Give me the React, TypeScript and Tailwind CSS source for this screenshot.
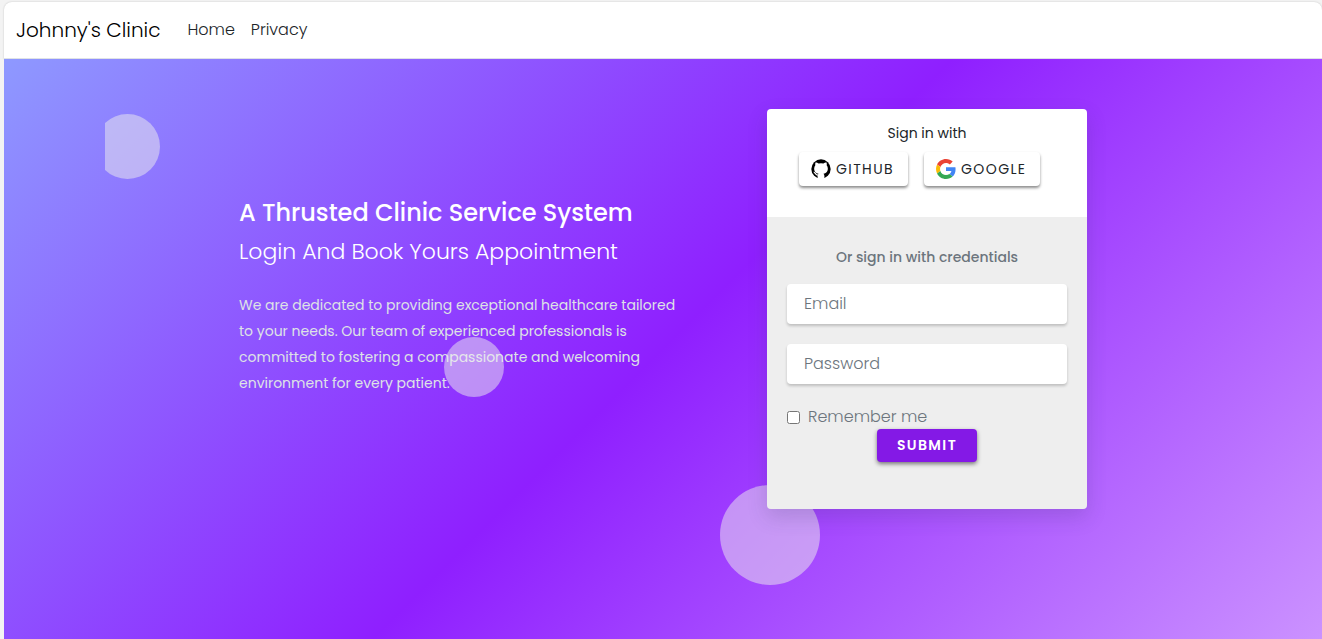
function GithubIcon() {
  return (
    <svg viewBox="0 0 24 24" className="size-5" aria-hidden="true">
      <circle cx="12" cy="12" r="11.6" fill="#000" />
      <path
        fill="#fff"
        d="M5.4 4.200c1.400 0 2.900.6 3.900 1.200a12 12 0 0 1 5.400 0c1-.6 2.500-1.200 3.900-1.200.5 1.200.5 2.300.2 3.200.9 1 1.400 2.300 1.400 3.900 0 4.100-2.300 5.700-5.200 6.300.7.6 1.100 1.500 1.100 2.700V24H7.900v-3.700c0-1.200.4-2.100 1.100-2.700-2.900-.6-5.200-2.200-5.200-6.300 0-1.600.5-2.900 1.400-3.900-.3-.9-.3-2 .2-3.200z"
      />
      <path fill="none" stroke="#fff" strokeWidth="1.500" d="M3.200 15.600c2.200.3 1.800 3.900 5.400 3.800" />
    </svg>
  );
}

function GoogleIcon() {
  return (
    <svg viewBox="0 0 48 48" className="size-5" aria-hidden="true">
      <path fill="#EA4335" d="M24 9.5c3.54 0 6.71 1.22 9.21 3.6l6.85-6.85C35.9 2.38 30.47 0 24 0 14.62 0 6.51 5.38 2.56 13.22l7.98 6.19C12.43 13.72 17.74 9.5 24 9.5z" />
      <path fill="#4285F4" d="M46.98 24.55c0-1.57-.15-3.09-.38-4.55H24v9.02h12.94c-.58 2.96-2.26 5.48-4.78 7.18l7.73 6c4.51-4.18 7.09-10.36 7.09-17.65z" />
      <path fill="#FBBC05" d="M10.53 28.59c-.48-1.45-.76-2.99-.76-4.59s.27-3.14.76-4.59l-7.98-6.19C.92 16.46 0 20.12 0 24c0 3.88.92 7.54 2.56 10.78l7.97-6.19z" />
      <path fill="#34A853" d="M24 48c6.48 0 11.93-2.13 15.89-5.81l-7.73-6c-2.15 1.45-4.92 2.3-8.16 2.3-6.26 0-11.57-4.22-13.47-9.91l-7.98 6.19C6.51 42.62 14.62 48 24 48z" />
    </svg>
  );
}

const socialButton =
  "flex h-[34px] items-center gap-[5px] rounded bg-white pr-[14px] pl-3 text-sm tracking-widest text-[#212529] uppercase shadow-[0_2px_3px_rgba(0,0,0,0.45)]";
const field =
  "h-10 w-full rounded bg-white px-[17px] pb-0.5 text-base font-light text-[#212529] shadow-[0_2px_3px_rgba(0,0,0,0.2)] outline-none placeholder:text-[#6c757d]";

export default function App() {
  return (
    <div className="flex min-h-screen flex-col bg-[#f3f3f3] pt-0.5 pl-1 font-[Poppins,Inter,sans-serif]">
      <header className="flex h-[57px] items-center gap-[27px] rounded-t-lg border-b border-[#dee2e6] bg-white px-3 shadow-[0_0_2px_rgba(0,0,0,0.2)]">
        <a href="#" className="text-xl font-light text-black">Johnny's Clinic</a>
        <nav className="flex gap-4 font-light text-[#212529]">
          <a href="#">Home</a>
          <a href="#">Privacy</a>
        </nav>
      </header>
      <main className="relative flex-1 overflow-hidden bg-[linear-gradient(135deg,#8e99ff_0%,#8f1fff_50%,#cb92ff_100%)] pt-[50px] pb-8">
        <div className="absolute inset-y-0 right-[101px] left-[101px] overflow-hidden" aria-hidden="true">
          <span className="absolute top-[55px] -left-[10px] size-[65px] rounded-full bg-[#eeeeee]/50" />
        </div>
        <div className="relative mx-auto flex max-w-[848px] items-start justify-between">
          <section className="w-[448px] pt-[86px] text-white">
            <h1 className="text-2xl leading-9 font-medium">A Thrusted Clinic Service System</h1>
            <p className="pt-[3px] text-[22px] leading-9 font-light">Login And Book Yours Appointment</p>
            <p className="pt-[22px] text-sm leading-[26px] text-[#dee2e6]">
              We are dedicated to providing exceptional healthcare tailored to your needs. Our team of experienced
              professionals is committed to fostering a compassionate and welcoming environment for every patient.
            </p>
          </section>
          <span className="absolute top-[228px] left-[205px] size-[60px] rounded-full bg-[#eeeeee]/50" aria-hidden="true" />
          <span className="absolute top-[376px] left-[481px] size-[100px] rounded-full bg-[#eeeeee]/50" aria-hidden="true" />
          <section className="relative w-80 overflow-hidden rounded shadow-[0_8px_20px_rgba(50,50,93,0.18)]">
            <div className="h-[108px] bg-white px-8 pt-3">
              <h2 className="mb-[7px] text-center text-sm leading-6 text-[#212529]">Sign in with</h2>
              <div className="flex gap-4">
                <button type="button" className={socialButton}>
                  <GithubIcon />
                  Github
                </button>
                <button type="button" className={socialButton}>
                  <GoogleIcon />
                  Google
                </button>
              </div>
            </div>
            <form className="flex flex-col bg-[#eeeeee] px-5 pt-7 pb-[47px]">
              <p className="mb-[15px] text-center text-sm leading-6 font-medium text-[#6c757d]">Or sign in with credentials</p>
              <input type="email" aria-label="Email" placeholder="Email" className={field} />
              <input type="password" aria-label="Password" placeholder="Password" className={`mt-5 ${field}`} />
              <label className="mt-[21px] flex items-center gap-2 font-light text-[#6c757d]">
                <input type="checkbox" className="size-[13px]" />
                Remember me
              </label>
              <button
                type="submit"
                className="h-[33px] w-[100px] self-center rounded bg-[#8419e6] pb-0.5 text-sm font-semibold tracking-widest text-white uppercase shadow-[0_2px_4px_rgba(0,0,0,0.5)]"
              >
                Submit
              </button>
            </form>
          </section>
        </div>
      </main>
    </div>
  );
}
